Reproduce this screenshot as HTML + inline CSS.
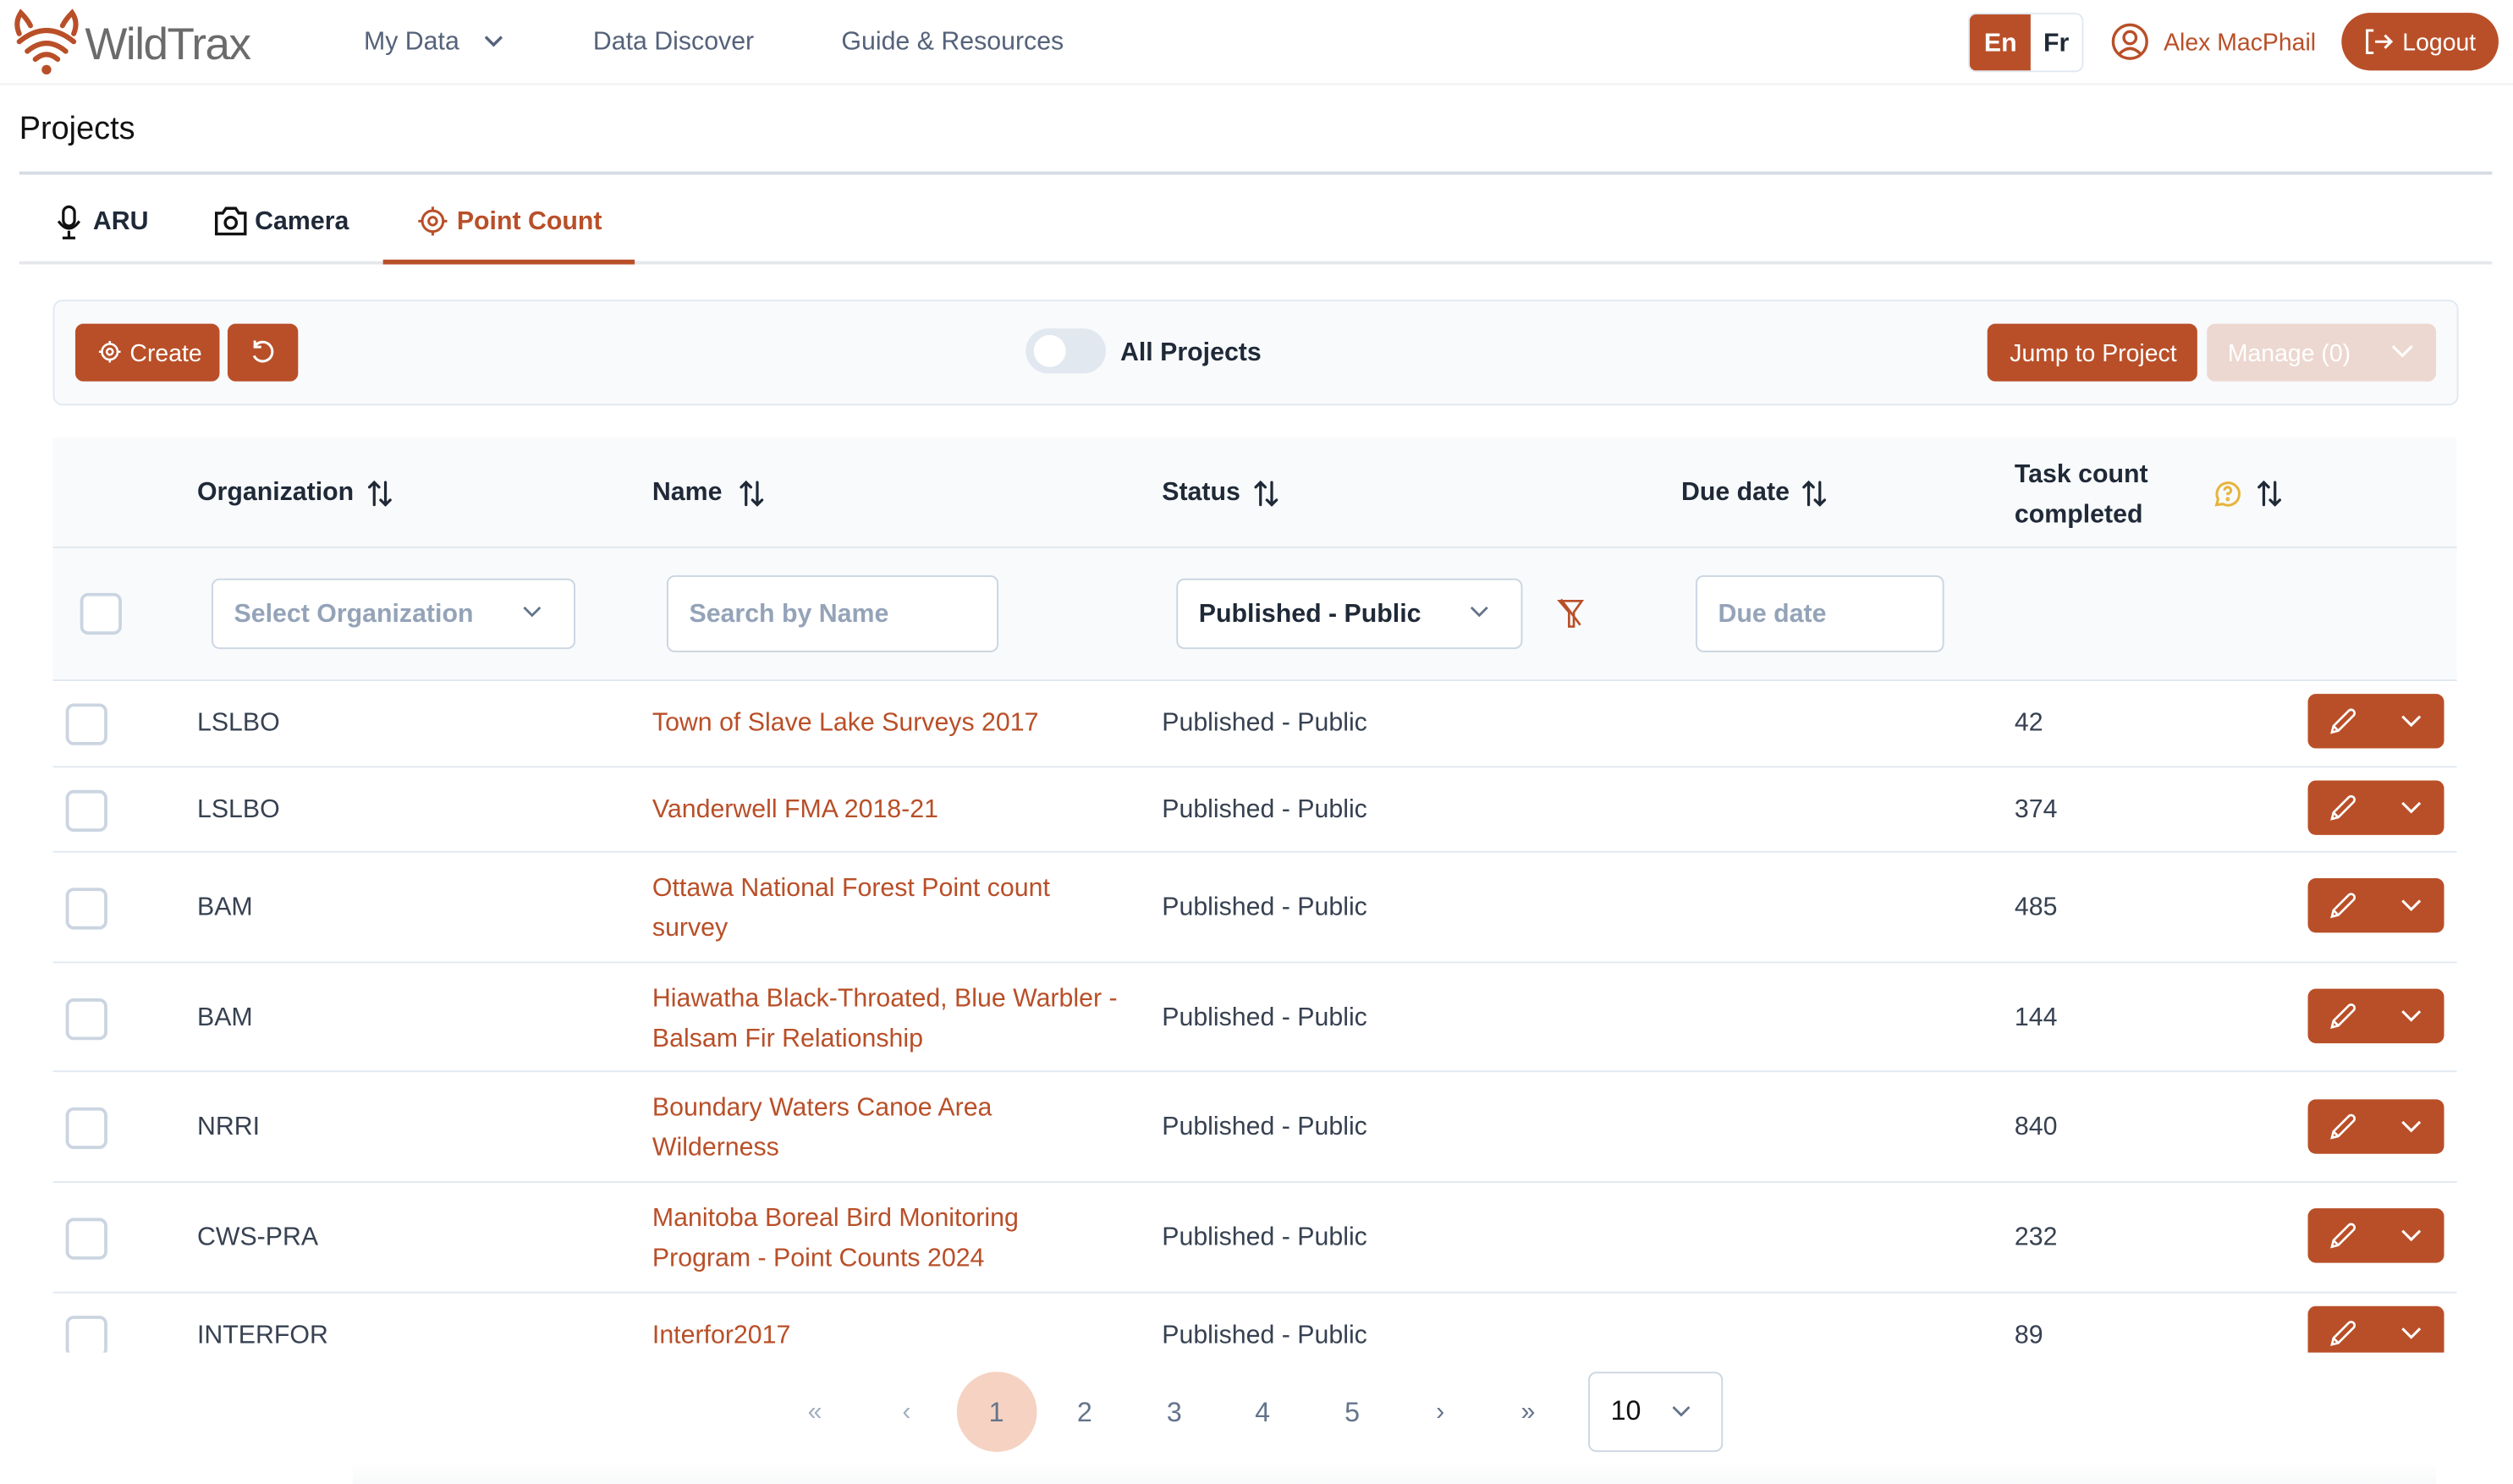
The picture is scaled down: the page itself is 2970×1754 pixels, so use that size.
<!DOCTYPE html>
<html><head><meta charset="utf-8"><style>
html,body{margin:0;padding:0;width:2970px;height:1754px;overflow:hidden;background:#fff}
#s{position:absolute;left:0;top:0;width:1568px;height:926px;transform:scale(1.89413);transform-origin:0 0;font-family:"Liberation Sans",sans-serif;color:#1f2937}
.a{position:absolute;white-space:nowrap}
.c{transform:translateY(calc(-50% + 1px))}
.o{color:#b94f28}
.btn{position:absolute;background:#b94f28;border-radius:5px;color:#fff}
.cb{position:absolute;width:22px;height:22px;border:2px solid #cbd5e1;border-radius:5px;background:#fff}
.in{position:absolute;border:1.5px solid #cbd5e1;border-radius:5px;background:#fff}
.t{font-size:16px;color:#374151}
.h{font-size:16px;font-weight:bold;color:#1f2937}
.ln{position:absolute;height:1px;background:#e2e8f0}
.so{position:absolute}
</style></head><body><div id="s">
<!-- header -->
<svg class="a" style="left:7px;top:4px" width="44" height="44" viewBox="0 0 44 44" fill="none" stroke="#b94f28" stroke-width="3.2" stroke-linecap="round">
<path d="M5 17 Q2 10 6 4 Q10 8 12 12"/><path d="M39 17 Q42 10 38 4 Q34 8 32 12"/>
<path d="M5 22 Q22 8 39 22"/><path d="M10 28 Q22 18 34 28"/><path d="M15 33 Q22 27 29 33"/>
<circle cx="22" cy="39.5" r="3" fill="#b94f28" stroke="none"/></svg>
<div class="a c" style="left:53px;top:27px;font-size:28px;color:#6b6b6b;letter-spacing:-0.8px">WildTrax</div>
<div class="a c" style="left:227px;top:26px;font-size:16px;color:#55627a">My Data</div>
<svg class="a" style="left:301px;top:20px" width="14" height="12"><path d="M2 3 L7 8 L12 3" stroke="#55627a" stroke-width="1.8" fill="none"/></svg>
<div class="a c" style="left:370px;top:26px;font-size:16px;color:#55627a">Data Discover</div>
<div class="a c" style="left:525px;top:26px;font-size:16px;color:#55627a">Guide &amp; Resources</div>
<div class="a" style="left:1228px;top:8px;width:70px;height:35px;border:1px solid #e2e8f0;border-radius:5px;overflow:hidden">
<div class="a" style="left:0;top:0;width:38px;height:35px;background:#b94f28"></div>
<div class="a c" style="left:9px;top:18px;font-size:16px;font-weight:bold;color:#fff">En</div>
<div class="a c" style="left:46px;top:18px;font-size:16px;font-weight:bold;color:#1f2937">Fr</div></div>
<svg class="a" style="left:1317px;top:14px" width="24" height="24" viewBox="0 0 24 24" fill="none" stroke="#b94f28" stroke-width="1.8"><circle cx="12" cy="12" r="10.5"/><circle cx="12" cy="9.5" r="3.8"/><path d="M5.5 19.5 Q12 13 18.5 19.5"/></svg>
<div class="a c o" style="left:1350px;top:26px;font-size:15px">Alex MacPhail</div>
<div class="a" style="left:1461px;top:8px;width:98px;height:36px;border-radius:18px;background:#b94f28"></div>
<svg class="a" style="left:1475px;top:17px" width="20" height="18" viewBox="0 0 20 18" fill="none" stroke="#fff" stroke-width="1.6"><path d="M6 2 H2 V16 H6"/><path d="M7 9 H17 M13 5 L17 9 L13 13"/></svg>
<div class="a c" style="left:1499px;top:26px;font-size:15px;color:#fff">Logout</div>
<div class="ln" style="left:0;top:52px;width:1568px;background:#eef0f2"></div>
<div class="a c" style="left:12px;top:80px;font-size:20px;color:#111">Projects</div>
<div class="ln" style="left:12px;top:107px;width:1543px;height:2px;background:#d5dce5"></div>
<!-- tabs -->
<svg class="a" style="left:35px;top:128px" width="16" height="22" viewBox="0 0 16 22" fill="none" stroke="#111" stroke-width="1.7"><rect x="4.5" y="1" width="7" height="12" rx="3.5"/><path d="M1.5 10 Q8 19 14.5 10 M8 16 V20 M4 20.5 H12"/></svg>
<div class="a c h" style="left:58px;top:138px">ARU</div>
<svg class="a" style="left:133px;top:128px" width="22" height="20" viewBox="0 0 22 20" fill="none" stroke="#111" stroke-width="1.8"><path d="M2 5 H6 L8 2 H14 L16 5 H20 V18 H2 Z"/><circle cx="11" cy="11" r="3.5"/></svg>
<div class="a c h" style="left:159px;top:138px">Camera</div>
<svg class="a" style="left:260px;top:128px" width="20" height="20" viewBox="0 0 20 20" fill="none" stroke="#b94f28" stroke-width="1.6"><circle cx="10" cy="10" r="6.5"/><circle cx="10" cy="10" r="2.5"/><path d="M10 1 V4 M10 16 V19 M1 10 H4 M16 10 H19"/></svg>
<div class="a c o" style="left:285px;top:138px;font-size:16px;font-weight:bold">Point Count</div>
<div class="ln" style="left:12px;top:163px;width:1543px;height:2px;background:#e5e7eb"></div>
<div class="a" style="left:239px;top:162px;width:157px;height:3px;background:#b94f28"></div>
<!-- toolbar -->
<div class="a" style="left:33px;top:187px;width:1499px;height:64px;background:#f8fafc;border:1px solid #e2e8f0;border-radius:6px"></div>
<div class="btn" style="left:47px;top:202px;width:90px;height:36px"></div>
<svg class="a" style="left:61px;top:212px" width="15" height="15" viewBox="0 0 20 20" fill="none" stroke="#fff" stroke-width="1.8"><circle cx="10" cy="10" r="6.5"/><circle cx="10" cy="10" r="2.5"/><path d="M10 1 V4 M10 16 V19 M1 10 H4 M16 10 H19"/></svg>
<div class="a c" style="left:81px;top:220px;font-size:15px;color:#fff">Create</div>
<div class="btn" style="left:142px;top:202px;width:44px;height:36px"></div>
<svg class="a" style="left:155px;top:211px" width="18" height="18" viewBox="0 0 18 18" fill="none" stroke="#fff" stroke-width="1.6"><path d="M4 5 A6 6 0 1 1 3.5 11"/><path d="M4 1.5 V5.5 H8"/></svg>
<div class="a" style="left:640px;top:205px;width:50px;height:28px;border-radius:14px;background:#e2e8f0"></div>
<div class="a" style="left:645px;top:209px;width:20px;height:20px;border-radius:10px;background:#fff"></div>
<div class="a c h" style="left:699px;top:220px">All Projects</div>
<div class="btn" style="left:1240px;top:202px;width:131px;height:36px"></div>
<div class="a c" style="left:1254px;top:220px;font-size:15px;color:#fff">Jump to Project</div>
<div class="a" style="left:1377px;top:202px;width:143px;height:36px;border-radius:5px;background:#ecd8d0"></div>
<div class="a c" style="left:1390px;top:220px;font-size:15px;color:#fff">Manage (0)</div>
<svg class="a" style="left:1491px;top:213px" width="16" height="12"><path d="M2 3 L8 9 L14 3" stroke="#fff" stroke-width="1.6" fill="none"/></svg>
<!-- table header -->
<div class="a" style="left:33px;top:273px;width:1500px;height:151px;background:#f8fafc"></div>
<div class="ln" style="left:33px;top:341px;width:1500px"></div>
<div class="ln" style="left:33px;top:424px;width:1500px"></div>
<div class="a c h" style="left:123px;top:307px">Organization</div>
<div class="a c h" style="left:407px;top:307px">Name</div>
<div class="a c h" style="left:725px;top:307px">Status</div>
<div class="a c h" style="left:1049px;top:307px">Due date</div>
<div class="a h" style="left:1257px;top:284px;line-height:25px">Task count<br>completed</div>
<svg class="a" style="left:1379px;top:298px" width="20" height="20" viewBox="0 0 20 20" fill="none" stroke="#e6b43a" stroke-width="1.6"><path d="M4 17 L5 13.5 A7 7 0 1 1 8 16.5 Z"/><path d="M9 8 A2 2 0 1 1 11 10 V11" /><circle cx="11" cy="13.5" r="0.5"/></svg>
<div id="sorts"></div>
<!-- filters -->
<div class="cb" style="left:50px;top:370px"></div>
<div class="in" style="left:132px;top:361px;width:225px;height:42px"></div>
<div class="a c" style="left:146px;top:383px;font-size:16px;font-weight:bold;color:#94a3b8">Select Organization</div>
<svg class="a" style="left:325px;top:377px" width="14" height="10"><path d="M2 2 L7 7 L12 2" stroke="#64748b" stroke-width="1.5" fill="none"/></svg>
<div class="in" style="left:416px;top:359px;width:205px;height:46px"></div>
<div class="a c" style="left:430px;top:383px;font-size:16px;font-weight:bold;color:#94a3b8">Search by Name</div>
<div class="in" style="left:734px;top:361px;width:214px;height:42px"></div>
<div class="a c h" style="left:748px;top:383px">Published - Public</div>
<svg class="a" style="left:916px;top:377px" width="14" height="10"><path d="M2 2 L7 7 L12 2" stroke="#64748b" stroke-width="1.5" fill="none"/></svg>
<svg class="a" style="left:971px;top:373px" width="18" height="20" viewBox="0 0 18 20" fill="none" stroke="#b94f28" stroke-width="1.4"><path d="M2 2 H16 L11 9 V18 H8 V9 Z"/><path d="M3 1 L15 17"/></svg>
<div class="in" style="left:1058px;top:359px;width:153px;height:46px"></div>
<div class="a c" style="left:1072px;top:383px;font-size:16px;font-weight:bold;color:#94a3b8">Due date</div>
<!-- rows -->
<div style="position:absolute;left:0;top:0;width:1568px;height:844px;overflow:hidden">
<div class="ln" style="left:33px;top:478px;width:1500px"></div>
<div class="ln" style="left:33px;top:531px;width:1500px"></div>
<div class="ln" style="left:33px;top:600px;width:1500px"></div>
<div class="ln" style="left:33px;top:668px;width:1500px"></div>
<div class="ln" style="left:33px;top:737px;width:1500px"></div>
<div class="ln" style="left:33px;top:806px;width:1500px"></div>

<div class="cb" style="left:41px;top:439px"></div><div class="a c t" style="left:123px;top:451px">LSLBO</div><div class="a c o" style="left:407px;top:451px;font-size:16px">Town of Slave Lake Surveys 2017</div><div class="a c t" style="left:725px;top:451px">Published - Public</div><div class="a c t" style="left:1257px;top:451px">42</div>
<div class="cb" style="left:41px;top:493px"></div><div class="a c t" style="left:123px;top:505px">LSLBO</div><div class="a c o" style="left:407px;top:505px;font-size:16px">Vanderwell FMA 2018-21</div><div class="a c t" style="left:725px;top:505px">Published - Public</div><div class="a c t" style="left:1257px;top:505px">374</div>
<div class="cb" style="left:41px;top:554px"></div><div class="a c t" style="left:123px;top:566px">BAM</div><div class="a c o" style="left:407px;top:566px;font-size:16px;line-height:25px">Ottawa National Forest Point count<br>survey</div><div class="a c t" style="left:725px;top:566px">Published - Public</div><div class="a c t" style="left:1257px;top:566px">485</div>
<div class="cb" style="left:41px;top:623px"></div><div class="a c t" style="left:123px;top:635px">BAM</div><div class="a c o" style="left:407px;top:635px;font-size:16px;line-height:25px">Hiawatha Black-Throated, Blue Warbler -<br>Balsam Fir Relationship</div><div class="a c t" style="left:725px;top:635px">Published - Public</div><div class="a c t" style="left:1257px;top:635px">144</div>
<div class="cb" style="left:41px;top:691px"></div><div class="a c t" style="left:123px;top:703px">NRRI</div><div class="a c o" style="left:407px;top:703px;font-size:16px;line-height:25px">Boundary Waters Canoe Area<br>Wilderness</div><div class="a c t" style="left:725px;top:703px">Published - Public</div><div class="a c t" style="left:1257px;top:703px">840</div>
<div class="cb" style="left:41px;top:760px"></div><div class="a c t" style="left:123px;top:772px">CWS-PRA</div><div class="a c o" style="left:407px;top:772px;font-size:16px;line-height:25px">Manitoba Boreal Bird Monitoring<br>Program - Point Counts 2024</div><div class="a c t" style="left:725px;top:772px">Published - Public</div><div class="a c t" style="left:1257px;top:772px">232</div>
<div class="cb" style="left:41px;top:821px"></div><div class="a c t" style="left:123px;top:833px">INTERFOR</div><div class="a c o" style="left:407px;top:833px;font-size:16px">Interfor2017</div><div class="a c t" style="left:725px;top:833px">Published - Public</div><div class="a c t" style="left:1257px;top:833px">89</div>

<div id="acts"></div>
</div>
<!-- pagination -->
<div class="a" style="left:597px;top:856px;width:50px;height:50px;border-radius:25px;background:#f6d2c2"></div>
<div class="a c" style="left:504px;top:881px;font-size:16px;color:#a0aec0">«</div>
<div class="a c" style="left:563px;top:881px;font-size:16px;color:#a0aec0">‹</div>
<div class="a c" style="left:617px;top:881px;font-size:17px;color:#64748b">1</div>
<div class="a c" style="left:672px;top:881px;font-size:17px;color:#64748b">2</div>
<div class="a c" style="left:728px;top:881px;font-size:17px;color:#64748b">3</div>
<div class="a c" style="left:783px;top:881px;font-size:17px;color:#64748b">4</div>
<div class="a c" style="left:839px;top:881px;font-size:17px;color:#64748b">5</div>
<div class="a c" style="left:896px;top:881px;font-size:16px;color:#64748b">›</div>
<div class="a c" style="left:949px;top:881px;font-size:16px;color:#64748b">»</div>
<div class="in" style="left:991px;top:856px;width:82px;height:48px"></div>
<div class="a c" style="left:1005px;top:880px;font-size:17px;color:#111">10</div>
<svg class="a" style="left:1042px;top:876px" width="14" height="10"><path d="M2 2 L7 7 L12 2" stroke="#64748b" stroke-width="1.5" fill="none"/></svg>
<div class="a" style="left:220px;top:912px;width:1300px;height:14px;background:linear-gradient(#fff,#f8f9fa)"></div>
</div>
<script>
var ys=[450,504,565,634,703,771,832],h='';
ys.forEach(function(y){h+='<div class="btn" style="left:1440px;top:'+(y-17)+'px;width:85px;height:34px"></div>'+
'<svg class="a" style="left:1453px;top:'+(y-9)+'px" width="18" height="18" viewBox="0 0 18 18" fill="none" stroke="#fff" stroke-width="1.4"><path d="M2 16 L3 12 L12.5 2.5 A1.8 1.8 0 0 1 15.5 5.5 L6 15 Z M3 12 L6 15"/></svg>'+
'<svg class="a" style="left:1497px;top:'+(y-5)+'px" width="15" height="10"><path d="M2 2 L7.5 7.5 L13 2" stroke="#fff" stroke-width="1.6" fill="none"/></svg>';});
document.getElementById('acts').outerHTML=h;
var sx=[229,461,782,1124,1408],s='';
sx.forEach(function(x){s+='<svg class="a" style="left:'+x+'px;top:299px" width="16" height="18" viewBox="0 0 16 18" fill="none" stroke="#1f2937" stroke-width="1.7" stroke-linecap="round"><path d="M4.5 16 V2 M1.5 5 L4.5 2 L7.5 5"/><path d="M11.5 2 V16 M8.5 13 L11.5 16 L14.5 13"/></svg>';});
document.getElementById('sorts').outerHTML=s;
</script>
</body></html>
